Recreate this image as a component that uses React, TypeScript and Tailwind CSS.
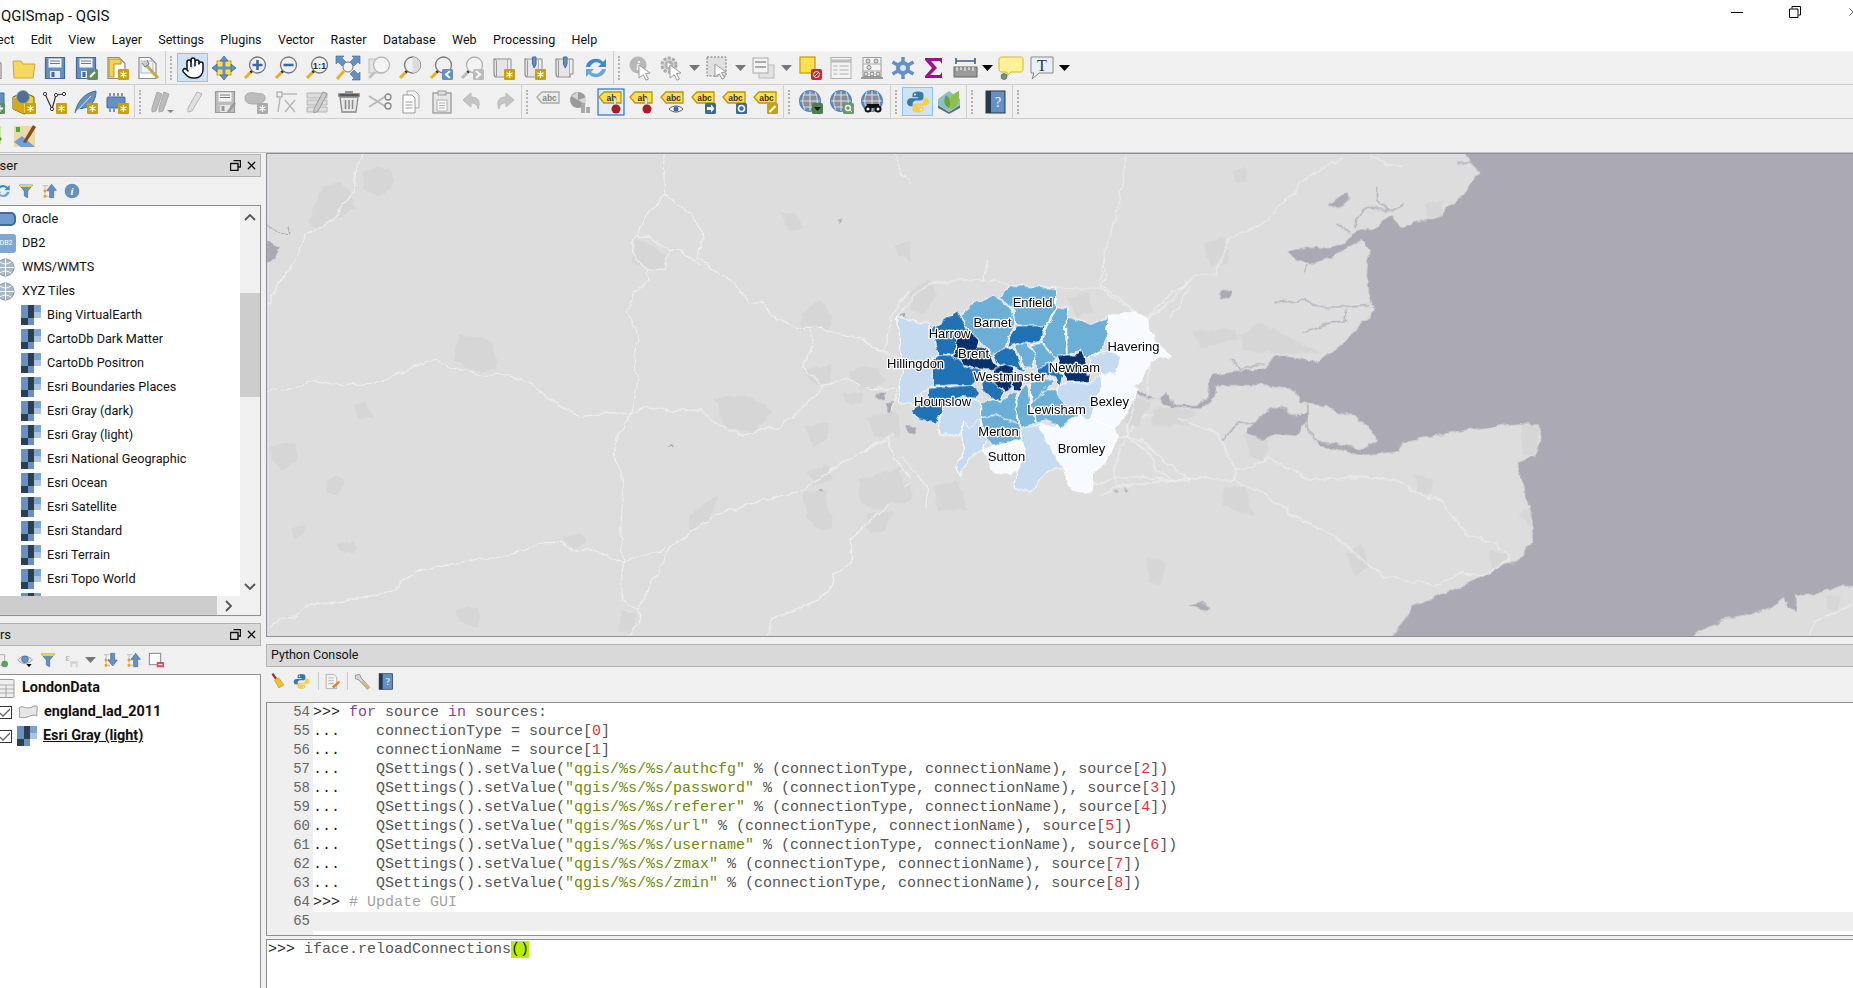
import type { ReactNode } from "react";
import { Hand, X } from "lucide-react";

const GOLD = "#c8a010";
const BLUE = "#6491c2";
const DARK = "#3f6a9e";
const GREY = "#b4b4b4";

function Ico({ children, s = 24 }: { children: ReactNode; s?: number }) {
  return (
    <svg viewBox="0 0 24 24" width={s} height={s} className="shrink-0 overflow-visible">
      {children}
    </svg>
  );
}

function Star({ grey }: { grey?: boolean }) {
  return (
    <g>
      <rect x="13" y="13" width="11" height="11" rx="1" fill={grey ? "#aaa" : GOLD} />
      <path d="M18.5 15v7M15.5 16.7l6 3.6M21.5 16.7l-6 3.6" stroke="#fff" strokeWidth="1.2" />
    </g>
  );
}

function Doc({ c = "#8a8a8a" }: { c?: string }) {
  return <path d="M3 1.5h11l6 6v15H3z" fill="#fff" stroke={c} strokeWidth="1.2" />;
}

function Floppy({ grey, children }: { grey?: boolean; children?: ReactNode }) {
  const f = grey ? "#bdbdbd" : BLUE;
  const d = grey ? "#9a9a9a" : DARK;
  return (
    <Ico>
      <path d="M2.5 1.5h19v21h-19z" fill={f} stroke={d} strokeWidth="1.2" />
      <rect x="5.5" y="2.5" width="13" height="9" fill="#f4f4f4" />
      <path d="M7 5h10M7 7.5h10" stroke="#777" />
      <rect x="7" y="15" width="10" height="7" fill="#e8e8e8" />
      <rect x="8.5" y="16" width="3" height="5" fill={d} />
      {children}
    </Ico>
  );
}

function Mag({ grey, children }: { grey?: boolean; children?: ReactNode }) {
  return (
    <Ico>
      <path d="M2 22l7-7" stroke={grey ? "#bbb" : "#e8b020"} strokeWidth="3" />
      <path d="M7.5 16.5l2-2" stroke="#222" strokeWidth="2.4" />
      <circle cx="14.5" cy="9" r="8" fill={grey ? "#f2f2f2" : "#f0f0f0"} stroke={grey ? "#b0b0b0" : "#777"} strokeWidth="1.3" />
      {children}
    </Ico>
  );
}

function Scroll({ pin, star }: { pin?: boolean; star?: boolean }) {
  return (
    <Ico>
      <path d="M3 3h14v18H6c-2 0-3-1-3-3z" fill="#e6e6e6" stroke="#8f8f8f" strokeWidth="1.2" />
      <path d="M3 3c1.6 0 2.5 1 2.5 3v14" fill="none" stroke="#999" />
      <path d="M17 3h3v15h-3" fill="#eee" stroke="#8f8f8f" />
      {pin && <path d="M10.5 1h3.5v7l-1.7 4-1.8-4z" fill={BLUE} stroke={DARK} />}
      {star && <Star />}
    </Ico>
  );
}

function Cursor({ x = 10, y = 9 }: { x?: number; y?: number }) {
  return (
    <path
      transform={`translate(${x} ${y})`}
      d="M0 0l11 8-4.5.5 3 5.5-2.5 1.2-2.8-5.5L0 13z"
      fill="#fff"
      stroke="#999"
    />
  );
}

function Tag({ grey, label = "abc", sel, children }: { grey?: boolean; label?: string; sel?: boolean; children?: ReactNode }) {
  return (
    <Ico>
      {sel && <rect x="-1" y="-1" width="26" height="26" fill="#e4eef8" stroke="#2a74d0" strokeWidth="1.2" />}
      <path d="M0 7l5-5h17v11H5z" fill={grey ? "#eee" : "#ffe14d"} stroke={grey ? "#aaa" : "#b8960c"} strokeWidth="1.3" />
      <text x="12.5" y="10.5" textAnchor="middle" fontSize="8.5" fontWeight="700" fontFamily="Liberation Sans, sans-serif" fill={grey ? "#888" : "#333"}>
        {label}
      </text>
      {children}
    </Ico>
  );
}

function Pin() {
  return (
    <g>
      <path d="M15 8h2v8h-2z" fill="#fff" stroke="#999" strokeWidth=".6" />
      <circle cx="17" cy="19" r="4.5" fill="#a81c28" />
    </g>
  );
}

function Corner({ children, c = "#3f6a8e" }: { children: ReactNode; c?: string }) {
  return (
    <g>
      <rect x="13" y="13" width="11" height="11" rx="1.5" fill={c} />
      {children}
    </g>
  );
}

function Globe({ children }: { children?: ReactNode }) {
  return (
    <Ico>
      <circle cx="11" cy="11" r="10" fill="#8c8c96" stroke="#4f88c6" strokeWidth="2" />
      <path d="M1 11h20M11 1v20M4 5h14M4 17h14M6 2c-3 6-3 12 0 18M16 2c3 6 3 12 0 18" stroke="#dde8f4" strokeWidth=".9" fill="none" />
      {children}
    </Ico>
  );
}

function Python({ s = 24 }: { s?: number }) {
  const d = "M12 1.5c-3.5 0-5.5 1-5.5 3v2.8H12v1H4.5c-2 0-3.5 1.700-3.5 4s1.5 4 3.5 4h2.200v-2.500c0-2 1.500-3.400 3.300-3.400h4.500c1.700 0 3-1.200 3-2.900V4.500c0-2-2-3-5.500-3z";
  return (
    <Ico s={s}>
      <path d={d} fill="#3c78a8" />
      <path d={d} fill="#f6cf45" transform="rotate(180 12 12)" />
      <circle cx="9" cy="4.5" r="1" fill="#fff" />
      <circle cx="15" cy="19.5" r="1" fill="#fff" />
    </Ico>
  );
}

function Book({ s = 24 }: { s?: number }) {
  return (
    <Ico s={s}>
      <rect x="3" y="1" width="19" height="22" fill={BLUE} stroke="#26384e" />
      <rect x="3" y="1" width="5" height="22" fill="#26384e" />
      <text x="15" y="17" textAnchor="middle" fontSize="14" fontFamily="Liberation Serif, serif" fill="#fff">?</text>
    </Ico>
  );
}

function Funnel({ s = 24 }: { s?: number }) {
  return (
    <Ico s={s}>
      <path d="M2 3h20l-7.5 9v10l-5-2.5V12z" fill={BLUE} stroke={DARK} />
      <path d="M2 3h20l-2 3H4z" fill="#f2cf4a" />
    </Ico>
  );
}

function Tree({ down, s = 24 }: { down?: boolean; s?: number }) {
  return (
    <Ico s={s}>
      <path d="M3 4h8M6 4v16h6M6 12h6" fill="none" stroke="#aaa" />
      <rect x="4" y="10" width="4" height="4" fill="#f0a020" />
      <rect x="4" y="18" width="4" height="4" fill="#f0a020" />
      <path d={down ? "M13 2h6v10h4l-7 9-7-9h4z" : "M16 2l7 9h-4v11h-6V11H9z"} fill={BLUE} stroke={DARK} />
    </Ico>
  );
}

function Arrow({ c = "#777" }: { c?: string }) {
  return (
    <div className="flex h-full w-[15px] shrink-0 items-center justify-center">
      <svg width="11" height="6" viewBox="0 0 11 6">
        <path d="M0 0h11L5.5 6z" fill={c} />
      </svg>
    </div>
  );
}

function Btn({ children, active }: { children: ReactNode; active?: boolean }) {
  return (
    <div className={active ? "flex h-[29px] w-[31px] shrink-0 items-center justify-center border border-[#8fc3ee] bg-[#cfe3f5]" : "flex h-full w-[31px] shrink-0 items-center justify-center"}>
      {children}
    </div>
  );
}

function Handle({ className }: { className: string }) {
  return (
    <div className={`flex h-full shrink-0 items-center ${className}`}>
      <div className="ml-[2px] h-full w-px bg-[#cfcfcf]" />
      <div className="ml-[4px] h-[24px] border-l-2 border-dotted border-[#b4b4b4]" />
    </div>
  );
}

function ToolRow({ children, last }: { children: ReactNode; last?: boolean }) {
  return (
    <div className={last ? "flex h-[34px] items-center border-b border-[#c4c4c4] bg-[#f0f0f0]" : "flex h-[34px] items-center border-b border-[#d0d0d0] bg-[#f0f0f0]"}>
      {children}
    </div>
  );
}

const menus = ["Project", "Edit", "View", "Layer", "Settings", "Plugins", "Vector", "Raster", "Database", "Web", "Processing", "Help"];

function Toolbars() {
  return (
    <div>
      <div className="border-t border-[#e6e6e6]" />
      <div className="-mt-px">
        <ToolRow>
          <div className="-ml-[23px] flex h-full items-center">
            <Btn><Ico><Doc /></Ico></Btn>
            <Btn>
              <Ico>
                <path d="M1 5h8l2 3h12l-2 14H2z" fill="#f6d860" stroke="#c9a83a" />
              </Ico>
            </Btn>
            <Btn><Floppy /></Btn>
            <Btn>
              <Floppy>
                <rect x="13" y="13" width="11" height="11" rx="1.5" fill="#5f8f60" />
                <path d="M16 21l5-5" stroke="#fff" strokeWidth="2" />
              </Floppy>
            </Btn>
            <Btn>
              <Ico>
                <Doc />
                <path d="M4 3h12v5H9v13H4z" fill="#f4d25a" stroke="#b8960c" />
                <Star />
              </Ico>
            </Btn>
            <Btn>
              <Ico>
                <Doc />
                <rect x="5" y="5" width="12" height="12" fill="#eef2fa" stroke="#a8b8d8" />
                <path d="M8 6l3 4 11 12" stroke="#c8a84a" strokeWidth="3" />
                <path d="M6 7l3 4 4-3-2-4" fill="#ccc" stroke="#777" />
              </Ico>
            </Btn>
          </div>
          <Handle className="w-[14px]" />
          <Btn active>
            <Hand size={24} fill="#fff" stroke="#111" strokeWidth={1.5} />
          </Btn>
          <Btn>
            <Ico>
              <rect x="5" y="5" width="14" height="14" fill="#ffe14d" stroke="#c8a010" />
              <path d="M12 0l4 5h-8zM12 24l4-5h-8zM0 12l5-4v8zM24 12l-5-4v8z" fill={BLUE} stroke={DARK} strokeWidth=".8" />
              <path d="M10.5 5h3v14h-3zM5 10.5h14v3H5z" fill={BLUE} />
            </Ico>
          </Btn>
          <Btn><Mag><path d="M9.5 9h10M14.5 4v10" stroke={DARK} strokeWidth="2.6" /></Mag></Btn>
          <Btn><Mag><path d="M9.5 9h10" stroke={DARK} strokeWidth="2.6" /></Mag></Btn>
          <Btn>
            <Mag>
              <text x="14.5" y="12.5" textAnchor="middle" fontSize="9.5" fontWeight="700" fontFamily="Liberation Sans, sans-serif" fill="#333">1:1</text>
            </Mag>
          </Btn>
          <Btn>
            <Ico>
              <path d="M0 0h8L6 2l4 4-4 4-4-4-2 2zM24 0v8l-2-2-4 4-4-4 4-4-2-2zM24 24h-8l2-2-4-4 4-4 4 4 2-2z" fill={BLUE} stroke={DARK} strokeWidth=".6" />
              <circle cx="12" cy="11" r="5" fill="#f4f4f4" stroke="#777" />
              <path d="M1 23l7-8" stroke="#e8b020" strokeWidth="3" />
            </Ico>
          </Btn>
          <Btn>
            <Ico>
              <rect x="2" y="3" width="14" height="14" fill="#e4e4e4" stroke="#bbb" />
              <path d="M2 22l6-6" stroke="#c4c4c4" strokeWidth="3" />
              <circle cx="14.5" cy="9" r="8" fill="#f4f4f4" stroke="#b8b8b8" strokeWidth="1.3" />
            </Ico>
          </Btn>
          <Btn>
            <Mag>
              <path d="M14.5 1a8 8 0 0 1 0 16z" fill="#dcdcdc" />
            </Mag>
          </Btn>
          <Btn>
            <Mag>
              <Corner c={BLUE}><path d="M21 15l-4 3.5 4 3.5" fill="none" stroke="#fff" strokeWidth="2" /></Corner>
            </Mag>
          </Btn>
          <Btn>
            <Mag grey>
              <Corner c="#bbb"><path d="M16 15l4 3.5-4 3.5" fill="none" stroke="#fff" strokeWidth="2" /></Corner>
            </Mag>
          </Btn>
          <Btn><Scroll star /></Btn>
          <Btn><Scroll pin star /></Btn>
          <Btn><Scroll pin /></Btn>
          <Btn>
            <Ico>
              <path d="M2 11C3 3 14 0 19 6l3-3v8h-8l3-3c-4-3-9-2-11 3z" fill="#3d8ad0" />
              <path d="M22 13c-1 8-12 11-17 5l-3 3v-8h8l-3 3c4 3 9 2 11-3z" fill="#6aa6dc" />
            </Ico>
          </Btn>
          <Handle className="w-[14px]" />
          <Btn>
            <Ico>
              <circle cx="9" cy="9" r="8.5" fill="#b8b8b8" />
              <text x="9" y="14" textAnchor="middle" fontSize="13" fontStyle="italic" fontWeight="700" fontFamily="Liberation Serif, serif" fill="#fff">i</text>
              <Cursor />
            </Ico>
          </Btn>
          <Btn>
            <Ico>
              <circle cx="9" cy="9" r="7" fill="#ddd" stroke="#aaa" strokeWidth="3" strokeDasharray="3 1.5" />
              <circle cx="9" cy="9" r="4.5" fill="#b0b0b0" />
              <path d="M7.5 6.5l4 2.5-4 2.5z" fill="#fff" />
              <Cursor />
            </Ico>
          </Btn>
          <Arrow />
          <Btn>
            <Ico>
              <rect x="1" y="1" width="19" height="19" fill="#e0e0e0" stroke="#777" strokeDasharray="2 1.5" />
              <Cursor x={9} y={8} />
            </Ico>
          </Btn>
          <Arrow />
          <Btn>
            <Ico>
              <rect x="7" y="9" width="15" height="13" fill="#e2e2e2" stroke="#bbb" />
              <rect x="1" y="2" width="15" height="15" fill="#f4f4f4" stroke="#aaa" />
              <path d="M3 6h11M3 11h11" stroke="#aaa" strokeWidth="2" />
            </Ico>
          </Btn>
          <Arrow />
          <Btn>
            <Ico>
              <rect x="2" y="1" width="15" height="16" fill="#ffe14d" stroke="#c8a010" strokeWidth="1.3" />
              <rect x="13" y="13" width="11" height="11" rx="2" fill="#d8222c" />
              <circle cx="18.5" cy="18.5" r="3" fill="none" stroke="#fff" />
              <path d="M16.5 20.5l4-4" stroke="#fff" />
            </Ico>
          </Btn>
          <Btn>
            <Ico>
              <rect x="2" y="1.5" width="20" height="21" fill="#f2f2f2" stroke="#b0b0b0" />
              <path d="M2 5h20" stroke="#bbb" strokeWidth="3" />
              <path d="M4.5 10h4M10.5 10h9M4.5 14h4M10.5 14h9M4.5 18h4M10.5 18h9" stroke="#b0b0b0" />
            </Ico>
          </Btn>
          <Btn>
            <Ico>
              <rect x="3" y="1.5" width="18" height="19" fill="#f4f4f4" stroke="#999" />
              <path d="M3 8h18M3 15h18" stroke="#aaa" />
              <circle cx="8" cy="5" r="2" fill="#ddd" stroke="#888" />
              <circle cx="16" cy="5" r="2" fill="#ddd" stroke="#888" />
              <circle cx="9" cy="11.5" r="2" fill="#ddd" stroke="#888" />
              <circle cx="6" cy="18" r="2" fill="#ddd" stroke="#888" />
              <circle cx="12" cy="18" r="2" fill="#ddd" stroke="#888" />
              <circle cx="18" cy="18" r="2" fill="#ddd" stroke="#888" />
              <path d="M1 22h22" stroke="#999" strokeWidth="2" />
            </Ico>
          </Btn>
          <Btn>
            <Ico>
              <path d="M12 1v22M1.5 6l21 12M22.5 6l-21 12" stroke={BLUE} strokeWidth="3.5" />
              <circle cx="12" cy="12" r="7" fill={BLUE} />
              <circle cx="12" cy="12" r="3" fill="#d8e4f2" />
            </Ico>
          </Btn>
          <Btn>
            <Ico>
              <path d="M3 2h17v6l-2-3H9l6 7-7 7h10l2-3v6H3v-2l7-8-7-8z" fill="#a0108c" />
            </Ico>
          </Btn>
          <Btn>
            <Ico>
              <path d="M3 5h19M3 2v6M22 2v6" stroke="#3f5f80" strokeWidth="1.6" />
              <rect x="1" y="11" width="23" height="10" fill="#9a9a9a" stroke="#666" />
              <path d="M4 11v4M8 11v3M12 11v4M16 11v3M20 11v4" stroke="#fff" />
            </Ico>
          </Btn>
          <Arrow c="#000" />
          <Btn>
            <Ico>
              <path d="M3 1h18c2 0 3 1 3 3v9c0 2-1 3-3 3h-9l-4 4v-4H3c-2 0-3-1-3-3V4c0-2 1-3 3-3z" fill="#fff09a" stroke="#d8b820" />
              <circle cx="5" cy="20.5" r="3" fill="#6f9a70" stroke="#555" strokeWidth=".6" />
            </Ico>
          </Btn>
          <Btn>
            <Ico>
              <path d="M1 1h22v16H9l-7 6 2-6H1z" fill="#e8f0f4" stroke="#888" />
              <text x="12" y="15" textAnchor="middle" fontSize="16" fontFamily="Liberation Serif, serif" fill="#333">T</text>
            </Ico>
          </Btn>
          <Arrow c="#000" />
        </ToolRow>
        <ToolRow>
          <div className="-ml-[23px] flex h-full items-center">
            <Btn>
              <Ico>
                <path d="M8 3h15v14H8z" fill={BLUE} stroke={DARK} />
                <rect x="13" y="13" width="11" height="11" rx="1" fill="#5f8f60" />
                <path d="M18.5 15v7M15 18.5h7" stroke="#fff" strokeWidth="2" />
              </Ico>
            </Btn>
            <Btn>
              <Ico>
                <path d="M1 7l11-5 10 5v12l-10 5-11-5z" fill="#f4d030" stroke="#6a5a10" />
                <path d="M1 7l11 5v12l-11-5z" fill="#d4a818" />
                <circle cx="11" cy="7" r="6.5" fill="#4f6f94" stroke="#9ab" />
                <Star />
              </Ico>
            </Btn>
            <Btn>
              <Ico>
                <path d="M2 4l7 15 4-14 8-1" fill="none" stroke="#333" strokeWidth="1.2" />
                <circle cx="2" cy="4" r="1.6" fill="#fff" stroke="#333" />
                <circle cx="9" cy="19" r="1.6" fill="#fff" stroke="#333" />
                <circle cx="13" cy="5" r="1.6" fill="#fff" stroke="#333" />
                <circle cx="21" cy="4" r="1.6" fill="#fff" stroke="#333" />
                <Star />
              </Ico>
            </Btn>
            <Btn>
              <Ico>
                <path d="M1 23C3 12 10 3 22 1c0 6-2 14-12 17l-6 1" fill={BLUE} stroke={DARK} />
                <path d="M2 22L17 6" stroke="#dce8f4" />
                <Star />
              </Ico>
            </Btn>
            <Btn>
              <Ico>
                <rect x="2" y="7" width="18" height="11" rx="1" fill={BLUE} stroke={DARK} />
                <path d="M5 3v3M9 3v3M13 3v3M17 3v3M5 19v3M9 19v3" stroke="#333" />
                <Star />
              </Ico>
            </Btn>
          </div>
          <Handle className="w-[15px]" />
          <Btn>
            <Ico>
              <path d="M6 2l5 2-6 17-4 1 0-4zM13 2l5 2-6 17-4 1 0-4z" fill="#bbb" stroke="#aaa" />
              <path d="M16 20h7l-3.5 3z" fill="#888" />
            </Ico>
          </Btn>
          <Btn>
            <Ico>
              <path d="M15 2l5 2-10 17-4 1 0-4z" fill="#e0e0e0" stroke="#b4b4b4" />
            </Ico>
          </Btn>
          <Btn>
            <Floppy grey>
              <path d="M15 22l7-9" stroke="#999" strokeWidth="2.5" />
            </Floppy>
          </Btn>
          <Btn>
            <Ico>
              <path d="M1 8c0-5 5-6 10-5s9 0 10 4-4 7-9 7-11 0-11-6z" fill="#bcbcbc" stroke="#aaa" />
              <Star grey />
            </Ico>
          </Btn>
          <Btn>
            <Ico>
              <rect x="2" y="2" width="5" height="5" fill="none" stroke="#999" />
              <path d="M8 4h14M3 22L5 8M10 10l10 12M20 10L10 22" stroke="#b8b8b8" strokeWidth="1.5" />
            </Ico>
          </Btn>
          <Btn>
            <Ico>
              <path d="M1 3h20v5H1zM1 10h20v5H1zM1 17h20v5H1z" fill="#ddd" stroke={GREY} />
              <path d="M17 2l4 2-9 17-4 2v-4z" fill="#ccc" stroke="#999" />
            </Ico>
          </Btn>
          <Btn>
            <Ico>
              <path d="M3 7h18l-2 15H5z" fill="#e8e8e8" stroke="#888" strokeWidth="1.3" />
              <path d="M2 4h20v2H2zM8 2h8" stroke="#777" strokeWidth="1.5" />
              <path d="M8.5 10v9M12 10v9M15.5 10v9" stroke="#888" strokeWidth="1.5" />
            </Ico>
          </Btn>
          <Btn>
            <Ico>
              <path d="M1 6l17 11M1 17L18 6" stroke="#b8b8b8" strokeWidth="1.8" />
              <circle cx="20" cy="7" r="3" fill="none" stroke="#888" strokeWidth="1.3" />
              <circle cx="20" cy="16" r="3" fill="none" stroke="#888" strokeWidth="1.3" />
            </Ico>
          </Btn>
          <Btn>
            <Ico>
              <path d="M8 1h8l4 4v13H8z" fill="#f4f4f4" stroke="#aaa" />
              <path d="M4 5h9l3 3v15H4z" fill="#fff" stroke="#999" />
              <path d="M6.5 12h7M6.5 15h7M6.5 18h7" stroke="#999" />
            </Ico>
          </Btn>
          <Btn>
            <Ico>
              <rect x="3" y="3" width="18" height="20" fill="#e8e8e8" stroke="#999" strokeWidth="1.3" />
              <rect x="8" y="1" width="8" height="4" fill="#ddd" stroke="#999" />
              <path d="M7 10h10v11H7z" fill="#fff" stroke="#aaa" />
              <path d="M9 13h6M9 15.5h6M9 18h6" stroke="#aaa" />
            </Ico>
          </Btn>
          <Btn>
            <Ico>
              <path d="M10 3L2 10l8 7v-4c4 0 6 1 7 6 3-8 0-12-7-12z" fill="#c4c4c4" stroke="#bbb" />
            </Ico>
          </Btn>
          <Btn>
            <Ico>
              <path d="M14 3l8 7-8 7v-4c-4 0-6 1-7 6-3-8 0-12 7-12z" fill="#c4c4c4" stroke="#bbb" />
            </Ico>
          </Btn>
          <Handle className="w-[14px]" />
          <Btn><Tag grey /></Btn>
          <Btn>
            <Ico>
              <circle cx="10" cy="10" r="8" fill="#9a9a9a" />
              <path d="M10 10l8-3v8zM10 10V2l-7 4z" fill="#d4d4d4" />
              <rect x="13" y="13" width="4" height="10" fill="#aaa" />
              <rect x="18" y="17" width="4" height="6" fill="#aaa" />
            </Ico>
          </Btn>
          <Btn><Tag label="ab" sel><Pin /></Tag></Btn>
          <Btn><Tag label="ab"><Pin /></Tag></Btn>
          <Btn>
            <Tag>
              <path d="M8 19c4-4 10-4 14 0-4 4-10 4-14 0z" fill="#fff" stroke="#456" />
              <circle cx="15" cy="19" r="2.5" fill="#3f6a9e" />
            </Tag>
          </Btn>
          <Btn>
            <Tag>
              <Corner><path d="M15 17h4v-2.5l3.5 4-3.5 4V20h-4z" fill="#fff" /></Corner>
            </Tag>
          </Btn>
          <Btn>
            <Tag>
              <Corner><circle cx="18.5" cy="18.5" r="3" fill="none" stroke="#fff" strokeWidth="1.6" /></Corner>
            </Tag>
          </Btn>
          <Btn>
            <Tag>
              <Corner c={GOLD}><path d="M15.5 22l6-6" stroke="#fff" strokeWidth="2.2" /></Corner>
            </Tag>
          </Btn>
          <Handle className="w-[14px]" />
          <Btn>
            <Globe>
              <Corner c="#4f7f50"><path d="M15 17h7l-3.5 4z" fill="#111" /></Corner>
            </Globe>
          </Btn>
          <Btn>
            <Globe>
              <Corner c="#6a9a6a"><circle cx="18" cy="18" r="2.5" fill="none" stroke="#fff" strokeWidth="1.3" /><path d="M20 20l2 2" stroke="#fff" /></Corner>
            </Globe>
          </Btn>
          <Btn>
            <Globe>
              <circle cx="7" cy="19" r="3.5" fill="#111" />
              <circle cx="17" cy="19" r="3.5" fill="#111" />
              <path d="M6 14h12v4H6z" fill="#111" />
              <circle cx="7" cy="19" r="1.5" fill="#fff" />
              <circle cx="17" cy="19" r="1.5" fill="#fff" />
            </Globe>
          </Btn>
          <Handle className="w-[14px]" />
          <Btn active><Python /></Btn>
          <Btn>
            <Ico>
              <path d="M1 15l11 7 11-7v3l-11 6-11-6z" fill="#5a7078" />
              <path d="M12 1l11 8v6l-11 7-11-7V9z" fill="#8cc0c4" />
              <path d="M22 1c1 10-2 17-8 18-6-4-2-14 8-18z" fill="#8cc04a" />
              <path d="M9 5c4 3 5 8 3 13-5-2-6-8-3-13z" fill="#6aa03a" />
            </Ico>
          </Btn>
          <Handle className="w-[15px]" />
          <Btn><Book /></Btn>
          <Handle className="w-[15px]" />
        </ToolRow>
        <ToolRow last>
          <div className="-ml-[22px] flex h-full items-center">
            <Btn>
              <Ico>
                <rect x="1" y="2" width="18" height="18" fill="#c8e8a8" />
                <path d="M4 22l5 2 10-10" fill="none" stroke="#5a9a20" strokeWidth="3" />
              </Ico>
            </Btn>
            <Btn>
              <Ico>
                <rect x="1" y="2" width="21" height="21" fill="#ecd9a8" />
                <path d="M1 18l8-6 13 11H8z" fill="#6aa0e0" />
                <path d="M3 3h4v5H3z" fill="#40b040" />
                <path d="M10 18L20 1l3 2-10 16z" fill="#8a4a20" />
              </Ico>
            </Btn>
          </div>
        </ToolRow>
      </div>
    </div>
  );
}

function DockTitle({ children, className }: { children: ReactNode; className: string }) {
  return (
    <div className="flex h-[23px] shrink-0 items-center overflow-hidden border border-l-0 border-[#b4b4b4] bg-[#d9d9d9]">
      <span className={`flex-1 whitespace-nowrap ${className}`}>{children}</span>
      <svg width="11" height="11" viewBox="0 0 11 11" className="mr-[4px]">
        <path d="M3.5.5h7v6.5H8M.5 3.5H8v7H.5z" fill="none" stroke="#111" strokeWidth="1.4" />
      </svg>
      <X size={13} strokeWidth={2.2} className="mr-[2px] text-black" />
    </div>
  );
}

const CHECK_CELLS = ["#6791c0", "#2e3e52", "#7aa2cc", "#6791c0", "#2e3e52", "#a9c4e2", "#2e3e52", "#6791c0", "#ffffff"];

function Checker({ s = 20 }: { s?: number }) {
  return (
    <svg width={s} height={s} viewBox="0 0 3 3" className="shrink-0" shapeRendering="crispEdges">
      {CHECK_CELLS.map((c, i) => (
        <rect key={i} x={i % 3} y={Math.floor(i / 3)} width="1" height="1" fill={c} />
      ))}
    </svg>
  );
}

function SmallGlobe() {
  return (
    <svg width="19" height="19" viewBox="0 0 20 20" className="shrink-0">
      <circle cx="10" cy="10" r="9" fill="#a9b8c9" stroke="#7a92ad" />
      <path d="M1 10h18M10 1v18M4 4c4 3 8 3 12 0M4 16c4-3 8-3 12 0" fill="none" stroke="#fff" />
    </svg>
  );
}

const tiles = [
  "Bing VirtualEarth",
  "CartoDb Dark Matter",
  "CartoDb Positron",
  "Esri Boundaries Places",
  "Esri Gray (dark)",
  "Esri Gray (light)",
  "Esri National Geographic",
  "Esri Ocean",
  "Esri Satellite",
  "Esri Standard",
  "Esri Terrain",
  "Esri Topo World",
  "",
];

function BrowserPanel() {
  const top: [string, ReactNode][] = [
    ["Oracle", <div className="h-[14px] w-[20px] rounded-[5px] border-2 border-[#3f6a9e] bg-[#6f9ccc]" />],
    ["DB2", <div className="flex h-[19px] w-[20px] items-center justify-center rounded-[3px] bg-[#7ea7d4] text-[7px] text-white">DB2</div>],
    ["WMS/WMTS", <SmallGlobe />],
    ["XYZ Tiles", <SmallGlobe />],
  ];
  return (
    <div className="flex h-[462px] shrink-0 flex-col">
      <DockTitle className="-ml-[30px] text-[13px]">Browser</DockTitle>
      <div className="flex h-[28px] shrink-0 items-center">
        <div className="-ml-[5px] flex items-center gap-[7px]">
          <Ico s={16}>
            <path d="M2 11C3 3 14 0 19 6l3-3v8h-8l3-3c-4-3-9-2-11 3z" fill="#3d8ad0" />
            <path d="M22 13c-1 8-12 11-17 5l-3 3v-8h8l-3 3c4 3 9 2 11-3z" fill="#6aa6dc" />
          </Ico>
          <Funnel s={16} />
          <Tree s={16} />
          <Ico s={16}>
            <circle cx="12" cy="12" r="11" fill={BLUE} />
            <text x="12" y="18" textAnchor="middle" fontSize="16" fontStyle="italic" fontWeight="700" fontFamily="Liberation Serif, serif" fill="#fff">i</text>
          </Ico>
        </div>
      </div>
      <div className="flex min-h-0 flex-1 flex-col border border-l-0 border-[#8f8f8f] bg-white">
        <div className="flex min-h-0 flex-1">
          <div className="min-w-0 flex-1 overflow-hidden pt-px text-[12.7px]">
            {top.map(([name, icon]) => (
              <div key={name} className="flex h-[24px] items-center">
                <div className="-ml-[4px] flex w-[26px] shrink-0 items-center pr-[4px]">{icon}</div>
                <span>{name}</span>
              </div>
            ))}
            {tiles.map((name, i) => (
              <div key={i} className="flex h-[24px] items-center pl-[21px]">
                <Checker />
                <span className="ml-[6px] whitespace-nowrap">{name}</span>
              </div>
            ))}
          </div>
          <div className="flex w-[20px] shrink-0 flex-col bg-[#f0f0f0]">
            <div className="flex h-[22px] items-center justify-center">
              <svg width="12" height="7" viewBox="0 0 12 7"><path d="M1 6l5-5 5 5" fill="none" stroke="#555" strokeWidth="1.8" /></svg>
            </div>
            <div className="mt-[65px] h-[104px] bg-[#cdcdcd]" />
            <div className="flex-1" />
            <div className="flex h-[20px] items-center justify-center">
              <svg width="12" height="7" viewBox="0 0 12 7"><path d="M1 1l5 5 5-5" fill="none" stroke="#555" strokeWidth="1.8" /></svg>
            </div>
          </div>
        </div>
        <div className="flex h-[19px] shrink-0 bg-[#f0f0f0]">
          <div className="w-[217px] bg-[#cdcdcd]" />
          <div className="flex w-[23px] items-center justify-center">
            <svg width="7" height="12" viewBox="0 0 7 12"><path d="M1 1l5 5-5 5" fill="none" stroke="#555" strokeWidth="1.8" /></svg>
          </div>
        </div>
      </div>
    </div>
  );
}

function Check() {
  return (
    <div className="-ml-[2px] flex h-[13px] w-[14px] shrink-0 items-center justify-center border border-[#333] bg-white">
      <svg width="10" height="9" viewBox="0 0 10 9"><path d="M0 5l3 3 7-7" fill="none" stroke="#666" strokeWidth="1.3" /></svg>
    </div>
  );
}

function LayersPanel() {
  return (
    <div className="mt-[7px] flex min-h-0 flex-1 flex-col">
      <DockTitle className="-ml-[27px] text-[13px]">Layers</DockTitle>
      <div className="flex h-[28px] shrink-0 items-center">
        <div className="-ml-[6px] flex items-center gap-[7px]">
          <Ico s={16}>
            <path d="M2 4h14v16H2z" fill="#eee" stroke="#999" />
            <circle cx="16" cy="18" r="5" fill="#5f9f60" />
          </Ico>
          <Ico s={16}>
            <path d="M1 12c6-8 16-8 22 0-6 7-16 7-22 0z" fill="#ddd" stroke="#888" />
            <circle cx="12" cy="11" r="5" fill={BLUE} stroke={DARK} />
            <path d="M14 18h8l-4 5z" fill="#111" />
          </Ico>
          <Funnel s={16} />
          <Ico s={16}>
            <text x="7" y="14" textAnchor="middle" fontSize="17" fontFamily="Liberation Serif, serif" fill="#aaa">ε</text>
            <path d="M11 14h11v9h-3v-5h-5v5h-3z" fill="#d4d4d4" />
          </Ico>
          <svg width="11" height="6" viewBox="0 0 11 6" className="mx-[-1px]"><path d="M0 0h11L5.5 6z" fill="#777" /></svg>
          <Tree down s={16} />
          <Tree s={16} />
          <Ico s={16}>
            <rect x="2" y="2" width="17" height="17" fill="#fff" stroke="#888" strokeWidth="1.5" />
            <rect x="13" y="15" width="11" height="8" rx="1" fill="#e04a5a" />
            <path d="M15.5 19h6" stroke="#fff" strokeWidth="1.6" />
          </Ico>
        </div>
      </div>
      <div className="min-h-0 flex-1 border border-b-0 border-l-0 border-[#8f8f8f] bg-white pt-px text-[14.4px] font-bold">
        <div className="flex h-[24px] items-center">
          <svg width="15" height="19" viewBox="0 0 15 19" className="shrink-0">
            <rect x="-4" y=".5" width="18" height="18" rx="1" fill="#efefef" stroke="#999" />
            <path d="M0 6h14M0 10h14M0 14h14M6 6v12" stroke="#aaa" />
          </svg>
          <span className="ml-[7px]">LondonData</span>
        </div>
        <div className="flex h-[24px] items-center">
          <Check />
          <svg width="20" height="14" viewBox="0 0 20 14" className="ml-[6px] shrink-0">
            <path d="M1 3c3-3 5 0 9 0s6-3 9-2c1 3-1 6 0 10-4-2-6 0-10 1-3 1-6 1-8 0 1-3 1-6 0-9z" fill="#e6e6e6" stroke="#999" />
          </svg>
          <span className="ml-[6px]">england_lad_2011</span>
        </div>
        <div className="flex h-[24px] items-center">
          <Check />
          <div className="ml-[5px]"><Checker /></div>
          <span className="ml-[6px] underline">Esri Gray (light)</span>
        </div>
      </div>
    </div>
  );
}

type Pts = number[];

function poly(p: Pts) {
  let s = "";
  for (let i = 0; i < p.length; i += 2) s += `${p[i]},${p[i + 1]} `;
  return s;
}

const westRoads: Pts[] = [
  [245, 40, 228, 90, 225, 155, 180, 230, 150, 262, 115, 278, 70, 390, 40, 430, 18, 495],
  [18, 753, 60, 750, 130, 722, 200, 737, 290, 727, 370, 680, 418, 658, 460, 683, 530, 705, 600, 708, 665, 740, 690, 775, 770, 830, 850, 818, 895, 825, 920, 802, 985, 812, 1065, 810, 1100, 855, 1165, 885, 1250, 860, 1320, 785, 1355, 740, 1410, 720, 1470, 745, 1535, 748],
  [973, 40, 970, 120, 975, 165, 930, 225, 905, 285, 895, 320, 905, 355, 935, 392, 935, 425, 900, 455, 885, 515, 915, 600, 900, 650, 910, 720, 895, 825, 860, 890, 852, 955, 870, 1000, 875, 1060, 870, 1130, 868, 1180, 875, 1265, 870, 1320, 872, 1380, 910, 1410, 912, 1450, 890, 1488],
  [975, 165, 1040, 225, 1068, 285, 1052, 355, 1100, 395, 1145, 430, 1178, 488, 1210, 490, 1240, 538, 1300, 562, 1350, 562, 1400, 585, 1440, 595, 1505, 640],
  [905, 285, 935, 295, 985, 330, 1010, 335, 1060, 375],
  [985, 330, 975, 390, 935, 392],
  [1325, 565, 1332, 620, 1308, 680, 1355, 740],
  [18, 1465, 50, 1435, 85, 1430, 105, 1400, 160, 1390, 270, 1370, 320, 1350, 375, 1295, 490, 1265, 575, 1255, 690, 1205, 725, 1205, 745, 1230, 800, 1228, 840, 1255, 875, 1265, 930, 1245, 975, 1228],
  [910, 1410, 945, 1330, 975, 1240, 1015, 1195, 1100, 1125, 1200, 1085, 1310, 1052, 1380, 985, 1410, 965, 1505, 900],
  [1225, 1488, 1230, 1440, 1340, 1385, 1375, 1340, 1385, 1300, 1425, 1270, 1425, 1195, 1500, 1110, 1568, 1030],
  [1505, 640, 1510, 590, 1535, 490, 1568, 450],
  [1535, 748, 1510, 850, 1510, 900, 1550, 990, 1568, 1015],
  [1530, 40, 1545, 100, 1568, 130],
];

const westUrban: Pts[] = [
  [245, 95, 285, 80, 320, 100, 315, 145, 280, 165, 245, 150],
  [150, 145, 190, 125, 215, 160, 230, 205, 175, 235, 140, 265, 110, 250, 125, 210],
  [480, 580, 560, 605, 570, 690, 500, 690, 465, 660],
  [1095, 775, 1170, 765, 1235, 815, 1190, 880, 1120, 860],
  [905, 295, 975, 340, 975, 390, 930, 385, 895, 365],
  [1250, 220, 1290, 220, 1310, 265, 1280, 275],
  [25, 915, 85, 910, 90, 960, 50, 990, 25, 960],
  [225, 795, 250, 790, 270, 835, 235, 835],
  [160, 1030, 185, 1000, 205, 1030, 185, 1065, 160, 1060],
  [75, 1170, 110, 1155, 95, 1195, 80, 1200],
  [180, 1215, 225, 1200, 225, 1240, 190, 1235],
  [730, 1195, 770, 1180, 785, 1205, 755, 1230],
  [1030, 1130, 1105, 1060, 1085, 1130, 1040, 1180],
  [470, 1410, 525, 1400, 525, 1460, 490, 1450],
  [870, 1410, 905, 1420, 900, 1480, 865, 1475],
  [1310, 1060, 1360, 1050, 1380, 1160, 1350, 1170, 1315, 1130],
  [1320, 990, 1370, 975, 1380, 1020, 1335, 1040],
  [1440, 1020, 1550, 980, 1530, 1060, 1480, 1070],
  [1310, 860, 1370, 845, 1365, 900, 1335, 920],
  [1300, 525, 1350, 480, 1380, 530, 1370, 565, 1305, 565],
  [1415, 690, 1470, 680, 1510, 720, 1470, 750, 1420, 720],
  [1405, 760, 1450, 755, 1450, 790, 1410, 785],
  [1310, 690, 1380, 675, 1370, 735, 1330, 730],
  [1460, 1120, 1525, 1115, 1505, 1170, 1470, 1180],
  [1530, 320, 1568, 295, 1568, 360, 1535, 345],
  [1480, 840, 1510, 830, 1505, 870, 1480, 865],
  [1510, 1060, 1568, 1020, 1568, 1080, 1530, 1090],
];

const westWater: Pts[] = [
  [15, 300, 45, 320, 35, 355, 15, 365],
  [1488, 762, 1505, 755, 1505, 778, 1490, 780],
  [1510, 790, 1522, 785, 1520, 815, 1510, 815],
  [1558, 860, 1568, 855, 1568, 880, 1558, 880],
  [984, 920, 990, 915, 998, 922],
  [1392, 238, 1400, 238, 1396, 250],
  [1348, 1048, 1355, 1048, 1355, 1060],
  [1545, 525, 1555, 520, 1553, 532],
];

const sea: Pts = [
  760, 10, 760, 40, 770, 70, 787, 95, 770, 140, 740, 190, 700, 230, 625, 263, 605, 220, 580, 260, 535, 270, 510, 310, 480, 325, 430, 320, 390, 335, 410, 365, 440, 370, 485, 350, 520, 320, 545, 300, 560, 330, 555, 400, 562, 490, 575, 505, 520, 590, 455, 665, 365, 645, 345, 685, 230, 705, 225, 770, 200, 795, 155, 795, 135, 760, 115, 775, 100, 770, 75, 750, 75, 757, 100, 780, 120, 772, 150, 802, 210, 802, 240, 770, 240, 735, 330, 735, 405, 748, 418, 790, 430, 785, 520, 825, 560, 860, 578, 900, 545, 925, 480, 908, 450, 905, 455, 918, 490, 925, 540, 945, 620, 935, 630, 905, 700, 885, 760, 870, 870, 850, 915, 850, 918, 900, 905, 950, 865, 965, 880, 1030, 900, 1130, 900, 1200, 880, 1250, 800, 1305, 760, 1335, 700, 1370, 650, 1400, 612, 1488, 600, 1520, 1210, 1520, 1230, 1488, 1300, 1440, 1385, 1410, 1430, 1370, 1500, 1360, 1550, 1335, 1620, 1340, 1620, 10,
];

const eastRoads: Pts[] = [
  [55, 45, 40, 180, 10, 340, 0, 430],
  [0, 435, 35, 470, 70, 515, 100, 540],
  [630, 80, 600, 75, 560, 45],
  [510, 50, 440, 100, 405, 150, 355, 225, 345, 245, 270, 295, 240, 400, 210, 400, 180, 425, 150, 480, 100, 535, 95, 545],
  [105, 650, 100, 760, 80, 830, 60, 880, 35, 940, 30, 1040],
  [0, 1065, 35, 1040, 130, 1025, 210, 1012, 280, 1025, 340, 1060, 400, 1125, 490, 1190, 530, 1240, 590, 1310, 700, 1335, 750, 1300, 800, 1305, 850, 1260, 850, 1240, 820, 1210, 760, 1180, 710, 1080, 670, 1070, 620, 1025, 560, 1010, 500, 1015, 435, 1020, 350, 955, 310, 985, 280, 985, 250, 900, 240, 875, 145, 825, 85, 830],
  [280, 985, 280, 1025],
  [60, 900, 100, 930, 115, 990, 160, 1025],
  [1475, 1488, 1490, 1440, 1568, 1395],
];

const eastUrban: Pts[] = [
  [270, 90, 300, 80, 305, 120, 285, 130],
  [215, 310, 260, 295, 270, 370, 230, 380],
  [190, 575, 280, 565, 290, 600, 210, 620],
  [290, 590, 330, 545, 400, 600, 460, 640, 360, 640, 300, 630],
  [680, 190, 715, 180, 710, 225, 675, 230],
  [300, 880, 350, 900, 340, 960, 310, 950],
  [655, 1010, 690, 1010, 690, 1060, 660, 1060],
  [255, 1045, 300, 1040, 320, 1125, 280, 1110, 255, 1095],
  [510, 1240, 545, 1210, 560, 1280, 530, 1310],
  [95, 1250, 135, 1260, 125, 1330, 100, 1325],
  [810, 1230, 850, 1240, 840, 1290, 815, 1285],
  [875, 850, 915, 850, 905, 950, 880, 945],
  [870, 1120, 900, 1100, 895, 1160],
  [120, 800, 200, 810, 180, 860, 140, 850],
  [60, 790, 80, 780, 75, 840, 55, 840],
  [1510, 1370, 1545, 1365, 1535, 1410, 1515, 1415],
];

const eastWater: Pts[] = [
  [250, 450, 270, 450, 270, 470, 250, 478],
  [475, 195, 510, 160, 520, 175, 495, 205],
  [305, 870, 350, 810, 380, 800, 400, 825, 430, 815, 430, 840, 410, 890, 360, 885, 340, 895, 305, 880],
  [185, 1395, 210, 1385, 228, 1410, 200, 1405],
  [1425, 1370, 1450, 1360, 1450, 1410, 1430, 1400],
];

const eastRivers: Pts[] = [
  [358, 488, 430, 480, 470, 505, 560, 497],
  [510, 510, 510, 545, 480, 545, 420, 578],
  [605, 212, 575, 180, 575, 140],
  [605, 212, 635, 195],
  [600, 210, 550, 205, 525, 260],
  [495, 250, 520, 280],
  [250, 905, 285, 850, 320, 850],
  [430, 790, 430, 860, 450, 905],
  [272, 660, 290, 690, 340, 670],
  [430, 375, 425, 400],
  [745, 70, 770, 70],
];

const boroughs: [string, Pts][] = [
  ["#c6dbef", [110, 170, 205, 195, 235, 280, 215, 295, 220, 360, 200, 385, 165, 420, 160, 440, 110, 425, 125, 340, 120, 250]],
  ["#2171b5", [210, 205, 290, 155, 330, 215, 290, 240, 280, 280, 235, 285, 215, 230]],
  ["#2171b5", [235, 285, 280, 285, 310, 320, 360, 330, 370, 360, 345, 365, 330, 375, 270, 375, 215, 380, 215, 300]],
  ["#2171b5", [200, 385, 270, 380, 330, 375, 365, 400, 345, 415, 310, 410, 250, 440, 225, 490, 175, 480, 155, 450, 200, 415]],
  ["#6baed6", [300, 165, 350, 125, 400, 105, 450, 145, 465, 180, 450, 215, 430, 260, 400, 285, 380, 265, 355, 240, 330, 215]],
  ["#6baed6", [420, 110, 450, 75, 585, 85, 585, 150, 555, 200, 465, 195, 460, 150]],
  ["#2171b5", [465, 197, 558, 197, 540, 245, 510, 250, 480, 250, 440, 260]],
  ["#6baed6", [590, 140, 622, 145, 615, 200, 618, 285, 585, 295, 550, 250, 545, 235]],
  ["#6baed6", [618, 170, 690, 195, 745, 170, 745, 210, 720, 275, 680, 295, 650, 270, 620, 285]],
  ["#f7fbff", [745, 170, 815, 155, 860, 175, 880, 240, 935, 290, 870, 300, 860, 330, 830, 370, 780, 380, 765, 340, 785, 290, 750, 280, 735, 210]],
  ["#c6dbef", [720, 280, 750, 275, 785, 290, 765, 340, 720, 345, 680, 295]],
  ["#6baed6", [465, 255, 490, 250, 530, 290, 515, 325, 490, 325, 475, 280]],
  ["#2171b5", [400, 285, 430, 258, 460, 265, 480, 310, 495, 340, 470, 325, 430, 310, 415, 315]],
  ["#6baed6", [510, 255, 545, 250, 585, 295, 565, 315, 530, 325, 530, 295]],
  ["#2171b5", [530, 325, 570, 310, 610, 345, 600, 385, 585, 350, 540, 345]],
  ["#2171b5", [365, 360, 400, 360, 430, 400, 420, 425, 395, 415, 370, 385]],
  ["#6baed6", [360, 425, 400, 420, 420, 430, 455, 400, 470, 400, 460, 440, 470, 495, 440, 480, 420, 465, 360, 470]],
  ["#6baed6", [485, 385, 500, 370, 515, 440, 525, 490, 480, 505, 460, 440]],
  ["#6baed6", [505, 360, 580, 355, 555, 385, 550, 445, 525, 490, 515, 420]],
  ["#6baed6", [555, 385, 585, 390, 600, 420, 650, 470, 600, 500, 560, 480, 525, 490, 515, 430]],
  ["#c6dbef", [590, 380, 620, 370, 685, 370, 720, 345, 725, 380, 690, 475, 650, 470, 620, 440, 590, 410]],
  ["#f7fbff", [725, 340, 780, 350, 830, 385, 820, 420, 785, 470, 765, 505, 690, 475, 725, 380]],
  ["#f7fbff", [530, 490, 600, 500, 650, 470, 690, 475, 765, 505, 770, 535, 735, 610, 700, 640, 695, 695, 630, 690, 610, 620, 560, 545]],
  ["#c6dbef", [480, 505, 530, 490, 560, 545, 610, 625, 560, 630, 510, 700, 460, 680, 470, 630, 495, 590, 485, 540]],
  ["#f7fbff", [370, 565, 485, 540, 495, 590, 470, 630, 450, 640, 400, 635, 385, 610]],
  ["#6baed6", [360, 470, 420, 465, 470, 495, 485, 540, 400, 555, 375, 540]],
  ["#c6dbef", [305, 490, 355, 470, 375, 540, 370, 565, 330, 590, 295, 650, 285, 620, 305, 590]],
  ["#c6dbef", [250, 440, 310, 410, 360, 425, 360, 470, 330, 500, 305, 485, 300, 530, 240, 520, 230, 495]],
  ["#08306b", [290, 240, 330, 215, 355, 240, 350, 265, 380, 265, 400, 300, 420, 325, 380, 330, 340, 325, 305, 315, 280, 285]],
  ["#08306b", [590, 290, 650, 280, 655, 265, 670, 285, 680, 345, 690, 345, 685, 365, 625, 370, 610, 340]],
  ["#08306b", [395, 330, 430, 310, 455, 320, 465, 370, 435, 400, 400, 365]],
  ["#08306b", [455, 340, 485, 345, 480, 395, 455, 390]],
];

const londonUrban: Pts[] = [
  [150, 100, 200, 55, 230, 100, 190, 165, 150, 150],
  [0, 320, 50, 325, 60, 375, 0, 385],
  [620, 110, 680, 100, 700, 150, 650, 175],
  [20, 470, 110, 450, 120, 530, 40, 530],
  [0, 660, 120, 640, 140, 710, 40, 750, 0, 730],
  [220, 680, 290, 660, 320, 750, 230, 750],
  [820, 400, 870, 430, 830, 500, 790, 480],
  [880, 450, 960, 440, 940, 500, 870, 500],
  [770, 190, 800, 155, 860, 175, 800, 210],
];

const londonWater: Pts[] = [
  [50, 400, 72, 395, 72, 420, 52, 420],
  [78, 428, 92, 425, 90, 458, 78, 458],
  [138, 500, 165, 495, 170, 520, 140, 520],
  [118, 162, 134, 160, 130, 172],
  [760, 692, 775, 692, 770, 698],
  [790, 686, 804, 688, 798, 695],
];

const londonRoads: Pts[] = [
  [0, 235, 60, 275, 110, 290],
  [110, 170, 170, 100, 200, 75, 280, 60, 370, 60, 450, 75, 600, 85, 720, 85, 780, 130, 860, 175],
  [930, 180, 990, 80],
  [780, 530, 850, 545, 905, 600, 990, 660],
  [0, 580, 60, 540, 100, 520],
  [120, 590, 200, 680, 200, 750],
  [830, 385, 800, 530, 770, 540],
  [370, 60, 385, 0],
  [730, 0, 740, 50, 720, 85],
  [860, 175, 930, 100, 990, 65],
  [650, 690, 740, 660, 830, 650, 990, 665],
];

const labels: [string, number, number][] = [
  ["Enfield", 1032, 303],
  ["Barnet", 992, 323],
  ["Harrow", 949, 334],
  ["Brent", 973, 354],
  ["Hillingdon", 915, 364],
  ["Westminster", 1009, 377],
  ["Newham", 1074, 368],
  ["Havering", 1133, 347],
  ["Hounslow", 942, 402],
  ["Lewisham", 1056, 410],
  ["Bexley", 1109, 402],
  ["Merton", 998, 432],
  ["Sutton", 1006, 457],
  ["Bromley", 1081, 449],
];

function MapCanvas() {
  const land = "#dddddd";
  const urban = "#d6d6d6";
  const water = "#aba9b3";
  const road = "#eeeeee";
  return (
    <svg viewBox="266 154 1587 482" preserveAspectRatio="none" className="block h-full w-full">
      <defs>
        <filter id="rough" filterUnits="userSpaceOnUse" x="256" y="144" width="1607" height="502" colorInterpolationFilters="sRGB">
          <feTurbulence type="fractalNoise" baseFrequency="0.09" numOctaves="3" seed="4" result="n" />
          <feDisplacementMap in="SourceGraphic" in2="n" scale="7" xChannelSelector="R" yChannelSelector="G" />
          <feGaussianBlur stdDeviation="0.35" />
        </filter>
      </defs>
      <rect x="266" y="154" width="1587" height="482" fill={land} />
      <g filter="url(#rough)">
        <g transform="translate(260 140) scale(0.4146 0.3333)">
          {westUrban.map((p, i) => <polygon key={i} points={poly(p)} fill={urban} />)}
          {westWater.map((p, i) => <polygon key={i} points={poly(p)} fill={water} />)}
          <polyline points={poly([18, 250, 45, 280, 70, 285, 65, 258])} fill="none" stroke={water} strokeWidth="1" vectorEffect="non-scaling-stroke" />
          {westRoads.map((p, i) => <polyline key={i} points={poly(p)} fill="none" stroke={road} strokeWidth="1.2" vectorEffect="non-scaling-stroke" />)}
        </g>
        <g transform="translate(1100 140) scale(0.4803 0.3333)">
          {eastUrban.map((p, i) => <polygon key={i} points={poly(p)} fill={urban} />)}
          <polygon points={poly(sea)} fill={water} />
          {eastWater.map((p, i) => <polygon key={i} points={poly(p)} fill={water} />)}
          {eastRivers.map((p, i) => <polyline key={i} points={poly(p)} fill="none" stroke={water} strokeWidth="1.2" vectorEffect="non-scaling-stroke" />)}
          {eastRoads.map((p, i) => <polyline key={i} points={poly(p)} fill="none" stroke={road} strokeWidth="1.2" vectorEffect="non-scaling-stroke" />)}
        </g>
        <g transform="translate(860 260) scale(0.3333)">
          {londonUrban.map((p, i) => <polygon key={i} points={poly(p)} fill={urban} />)}
          {londonWater.map((p, i) => <polygon key={i} points={poly(p)} fill={water} />)}
          {londonRoads.map((p, i) => <polyline key={i} points={poly(p)} fill="none" stroke={road} strokeWidth="1.2" vectorEffect="non-scaling-stroke" />)}
          {boroughs.map(([c, p], i) => <polygon key={i} points={poly(p)} fill={c} stroke="#fff" strokeWidth="1" vectorEffect="non-scaling-stroke" />)}
        </g>
      </g>
      {labels.map(([t, x, y]) => (
        <text key={t} x={x} y={y + 4.5} textAnchor="middle" fontSize="13" fontFamily="Liberation Sans, Arial, sans-serif" fill="#000" stroke="#fff" strokeWidth="2.5" paintOrder="stroke" strokeLinejoin="round">
          {t}
        </text>
      ))}
    </svg>
  );
}

type Tok = [string, string?];

const STR = "text-[#6f8a0a]";
const NUM = "text-[#e0303a]";
const KW = "text-[#8a3fa0]";
const CM = "text-[#a3a3a3]";
const PROMPT = "text-[#222]";

function setting(key: string, idx: string): Tok[] {
  return [["... ", PROMPT], ["   QSettings().setValue("], [`"qgis/%s/%s/${key}"`, STR], [" % (connectionType, connectionName), source["], [idx, NUM], ["])"]];
}

const lines: Tok[][] = [
  [[">>> ", PROMPT], ["for", KW], [" source "], ["in", KW], [" sources:"]],
  [["... ", PROMPT], ["   connectionType = source["], ["0", NUM], ["]"]],
  [["... ", PROMPT], ["   connectionName = source["], ["1", NUM], ["]"]],
  setting("authcfg", "2"),
  setting("password", "3"),
  setting("referer", "4"),
  setting("url", "5"),
  setting("username", "6"),
  setting("zmax", "7"),
  setting("zmin", "8"),
  [[">>> ", PROMPT], ["# Update GUI", CM]],
  [],
];

function PythonConsole() {
  return (
    <div className="mt-[7px] flex min-h-0 flex-1 flex-col">
      <div className="flex h-[23px] shrink-0 items-center border border-r-0 border-[#b4b4b4] bg-[#d9d9d9] pl-[4px]">
        Python Console
      </div>
      <div className="flex h-[35px] shrink-0 items-center pb-[7px] pl-[5px]">
        <Ico s={17}>
          <path d="M3 2l5 7M5 10l6-3 7 10-7 4z" fill="#f0c030" stroke="#c89a10" />
          <path d="M2 1l5 7" stroke="#a82020" strokeWidth="3" />
        </Ico>
        <div className="ml-[5px]"><Python s={17} /></div>
        <div className="ml-[8px] h-[18px] w-px bg-[#c8c8c8]" />
        <div className="ml-[5px]">
          <Ico s={17}>
            <path d="M3 2h11l4 4v16H3z" fill="#f4f4f4" stroke="#999" />
            <path d="M6 7h8M6 11h8M6 15h8" stroke="#999" />
            <path d="M11 19l10-8 2 2-9 9z" fill="#e88030" />
          </Ico>
        </div>
        <div className="ml-[6px] h-[18px] w-px bg-[#c8c8c8]" />
        <div className="ml-[6px]">
          <Ico s={17}>
            <path d="M2 3l6-1 2 5 12 13-3 3L7 10 2 8z" fill="#d8d8d8" stroke="#777" />
            <path d="M12 11l10 10-2 2-10-10z" fill="#d8b850" />
          </Ico>
        </div>
        <div className="ml-[6px]"><Book s={17} /></div>
      </div>
      <div className="h-[234px] shrink-0 border border-r-0 border-[#8f8f8f] bg-[#efefef] font-['Liberation_Mono',monospace] text-[15px] leading-[19px] text-[#555]">
        <div className="flex h-full flex-col">
          {lines.map((toks, i) => (
            <div key={i} className="flex h-[19px] shrink-0">
              <div className="w-[46px] shrink-0 pr-[3px] text-right text-[14px] text-[#666]">{54 + i}</div>
              <div className={i === 11 ? "flex-1 whitespace-pre bg-[#efefef]" : "flex-1 whitespace-pre bg-white"}>
                {toks.map(([text, cls], j) => (
                  <span key={j} className={cls}>{text}</span>
                ))}
              </div>
            </div>
          ))}
          <div className="flex flex-1">
            <div className="w-[46px] shrink-0" />
            <div className="flex-1 bg-white" />
          </div>
        </div>
      </div>
      <div className="mt-[3px] min-h-0 flex-1 border-t border-l border-[#8f8f8f] bg-white pl-[1px] font-['Liberation_Mono',monospace] text-[15px] leading-[19px] text-[#555]">
        <div className="whitespace-pre">
          <span className={PROMPT}>{">>> "}</span>iface.reloadConnections<span className="bg-[#b4f000] text-[#222]">()</span>
        </div>
      </div>
    </div>
  );
}

export default function App() {
  return (
    <div className="flex h-[988px] w-[1853px] flex-col overflow-hidden bg-[#f0f0f0] font-['Roboto','Noto_Sans',sans-serif] text-[12.5px] text-[#111]">
      <div className="flex h-[28px] shrink-0 items-center bg-white pl-px pt-[4px] text-[15px]">
        <span className="flex-1">QGISmap - QGIS</span>
        <div className="flex h-full w-[58px] items-center justify-center pb-[8px]">
          <div className="h-px w-[12px] bg-black" />
        </div>
        <div className="flex h-full w-[58px] items-center justify-center pb-[8px]">
          <svg width="12" height="12" viewBox="0 0 12 12"><path d="M3 2.5V.5h8.5V9h-2M.5 3H9v8.500H.5z" fill="none" stroke="#000" /></svg>
        </div>
        <div className="-mr-[29px] flex h-full w-[58px] items-center justify-center pb-[8px]">
          <X size={14} strokeWidth={1} className="text-black" />
        </div>
      </div>
      <div className="flex h-[23px] shrink-0 items-center overflow-hidden bg-white pt-[2px]">
        <div className="-ml-[25px] flex items-center gap-[16.4px]">
          {menus.map((m) => <span key={m}>{m}</span>)}
        </div>
      </div>
      <Toolbars />
      <div className="flex min-h-0 flex-1 gap-[5px]">
        <div className="flex w-[261px] shrink-0 flex-col pt-px">
          <BrowserPanel />
          <LayersPanel />
        </div>
        <div className="flex min-w-0 flex-1 flex-col">
          <div className="h-[484px] shrink-0 border-y border-l border-[#8f8f99]">
            <MapCanvas />
          </div>
          <PythonConsole />
        </div>
      </div>
    </div>
  );
}
